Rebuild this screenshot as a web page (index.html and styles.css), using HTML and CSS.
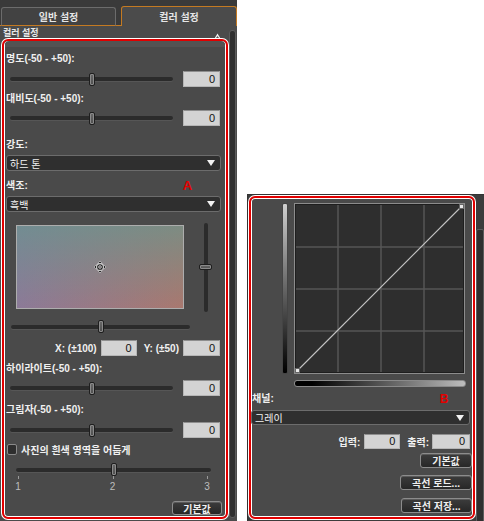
FILE: index.html
```html
<!DOCTYPE html>
<html lang="ko">
<head>
<meta charset="utf-8">
<title>컬러 설정</title>
<link rel="stylesheet" href="styles.css">
</head>
<body>
<div class="stage">
  <section class="panel-left">
    <div class="tabs">
      <div class="tab-gap first"></div>
      <div class="tab">일반 설정</div>
      <div class="tab-gap"></div>
      <div class="tab active">컬러 설정</div>
    </div>
    <div class="pane">
      <div class="pane-main">
        <div class="pane-head">
          <span>컬러 설정</span>
          <svg class="caret" width="7" height="6" viewBox="0 0 7 6"><path d="M3.5 0.5 L6.5 5.5 L0.5 5.5 Z" fill="#f2f2f2"/><path d="M3.5 3 L5 5 L2 5 Z" fill="#555"/></svg>
        </div>
        <div class="frame frame-a">
          <div class="band"></div>
          <div class="lbl m5">명도(-50 - +50):</div>
          <div class="srow m5">
            <div class="slider w163"><div class="track"></div><div class="thumb" style="left:50.5%"></div></div>
            <div class="num">0</div>
          </div>
          <div class="lbl m5">대비도(-50 - +50):</div>
          <div class="srow m4">
            <div class="slider w163"><div class="track"></div><div class="thumb" style="left:50.5%"></div></div>
            <div class="num">0</div>
          </div>
          <div class="lbl m12">강도:</div>
          <div class="select sel-a m3"><span>하드 톤</span><i class="arrow"></i></div>
          <div class="lbl lbl-row m8"><span>색조:</span><b class="mark mark-a">A</b></div>
          <div class="select sel-a m3"><span>흑백</span><i class="arrow"></i></div>
          <div class="tone m11">
            <div class="tone-box">
              <svg class="cross" width="13" height="13" viewBox="0 0 13 13">
                <path d="M6.5 0.5 L4.3 3 L8.7 3 Z M6.5 12.5 L4.3 10 L8.7 10 Z M0.5 6.5 L3 4.3 L3 8.7 Z M12.5 6.5 L10 4.3 L10 8.7 Z" fill="#111" stroke="#eee" stroke-width="0.6"/>
                <circle cx="6.5" cy="6.5" r="2.3" fill="none" stroke="#eee" stroke-width="2.2"/>
                <circle cx="6.5" cy="6.5" r="2.3" fill="none" stroke="#111" stroke-width="1.1"/>
              </svg>
            </div>
            <div class="vslider"><div class="vtrack"></div><div class="vthumb" style="top:49%"></div></div>
          </div>
          <div class="hrow m8">
            <div class="slider w179"><div class="track"></div><div class="thumb" style="left:50.3%"></div></div>
          </div>
          <div class="xyrow m7">
            <span class="xy-l">X: (±100)</span>
            <div class="num w36">0</div>
            <span class="xy-l y">Y: (±50)</span>
            <div class="num">0</div>
          </div>
          <div class="lbl m6">하이라이트(-50 - +50):</div>
          <div class="srow m4">
            <div class="slider w163"><div class="track"></div><div class="thumb" style="left:50.5%"></div></div>
            <div class="num">0</div>
          </div>
          <div class="lbl m7">그림자(-50 - +50):</div>
          <div class="srow m5">
            <div class="slider w163"><div class="track"></div><div class="thumb" style="left:50.5%"></div></div>
            <div class="num">0</div>
          </div>
          <div class="check m5"><span class="box"></span><span class="check-l">사진의 흰색 영역을 어둡게</span></div>
          <div class="hrow3 m8">
            <div class="slider w195"><div class="track"></div><div class="thumb" style="left:50%"></div></div>
          </div>
          <div class="ticks"><i></i><i></i><i></i></div>
          <div class="tnums"><span>1</span><span>2</span><span>3</span></div>
          <div class="btnrow m8"><div class="btn w50">기본값</div></div>
        </div>
      </div>
      <div class="scroll scroll-a"></div>
    </div>
  </section>

  <section class="panel-right">
    <div class="frame frame-b">
      <div class="curve m5">
        <div class="vbar"></div>
        <svg class="grid" width="171" height="171" viewBox="0 0 171 171">
          <rect x="0.5" y="0.5" width="170" height="170" fill="#2e2e2e" stroke="#8c8c8c"/>
          <rect x="1.5" y="1.5" width="168" height="168" fill="none" stroke="#1e1e1e"/>
          <g stroke="#565656" stroke-width="1.5">
            <line x1="44" y1="2" x2="44" y2="169"/>
            <line x1="87" y1="2" x2="87" y2="169"/>
            <line x1="130" y1="2" x2="130" y2="169"/>
            <line x1="2" y1="44" x2="169" y2="44"/>
            <line x1="2" y1="86" x2="169" y2="86"/>
            <line x1="2" y1="128" x2="169" y2="128"/>
          </g>
          <line x1="3.5" y1="167.5" x2="167.5" y2="3.5" stroke="#c4c4c4" stroke-width="1.1"/>
          <rect x="1.5" y="165.5" width="4" height="4" fill="#e8e8e8" stroke="#666" stroke-width="1"/>
          <rect x="165.5" y="1.5" width="4" height="4" fill="#e8e8e8" stroke="#666" stroke-width="1"/>
        </svg>
      </div>
      <div class="hbar m6"></div>
      <div class="lbl lbl-b lbl-row m5"><span>채널:</span><b class="mark mark-b">B</b></div>
      <div class="select sel-b m4"><span>그레이</span><i class="arrow"></i></div>
      <div class="iorow m9">
        <span class="io-l">입력:</span>
        <div class="num w36">0</div>
        <span class="io-l o">출력:</span>
        <div class="num w38">0</div>
      </div>
      <div class="btnrow-b m4"><div class="btn w52">기본값</div></div>
      <div class="btnrow-b m7"><div class="btn w72">곡선 로드...</div></div>
      <div class="btnrow-b m8"><div class="btn w71">곡선 저장...</div></div>
    </div>
    <div class="scroll scroll-b"></div>
  </section>
</div>
</body>
</html>
```

FILE: styles.css
```css
* { box-sizing: border-box; }
html, body { margin: 0; padding: 0; background: #fff; }
body {
  font-family: "Liberation Sans", "Noto Sans CJK KR", sans-serif;
  font-size: 10px;
  color: #ececec;
}
.stage { display: flex; align-items: flex-start; width: 484px; height: 521px; }

.m3 { margin-top: 3px; } .m4 { margin-top: 4px; } .m5 { margin-top: 5px; }
.m6 { margin-top: 6px; } .m7 { margin-top: 7px; } .m8 { margin-top: 8px; }
.m9 { margin-top: 9px; } .m11 { margin-top: 11px; } .m12 { margin-top: 12px; }

/* ---------- left panel ---------- */
.panel-left {
  width: 237px; height: 521px; flex: none;
  background: #3a3a3a;
  display: flex; flex-direction: column;
}
.tabs { height: 26px; flex: none; display: flex; align-items: flex-end; }
.tab-gap { width: 5px; height: 1px; background: #c47a22; }
.tab-gap.first { width: 1px; }
.tab {
  width: 115px; height: 19px;
  border: 1px solid #6c6c6c; border-bottom: 1px solid #c47a22;
  border-radius: 3px 3px 0 0;
  background: #424242;
  display: flex; align-items: center; justify-content: center;
  font-weight: bold; font-size: 10px; color: #e6e6e6;
  padding-bottom: 1px;
}
.tab.active {
  width: 116px; height: 20px;
  border: 1px solid #c47a22; border-bottom: none;
  background: #4b4b4b;
  padding-bottom: 0;
}
.pane { flex: 1; display: flex; background: #4b4b4b; }
.pane-main { width: 229px; display: flex; flex-direction: column; }
.pane-head {
  height: 13px; display: flex; align-items: center;
  padding: 0 8px 0 3px;
  font-size: 9px; font-weight: bold; color: #e8e8e8;
}
.caret { margin-left: auto; margin-top: 7px; }

.frame {
  border: 2px solid #e10000;
  border-radius: 6px;
  box-shadow: 0 0 0 1px #fff, inset 0 0 0 1px #fff;
  background: #4a4a4a;
  display: flex; flex-direction: column;
}
.frame-a { margin-left: 2px; width: 226px; height: 480px; }
.band { height: 6px; background: #535353; margin: 0 1px; border-radius: 4px 4px 0 0; }

.lbl {
  height: 14px; line-height: 14px;
  font-weight: bold; font-size: 10px; color: #f0f0f0;
  padding-left: 2px; white-space: nowrap;
}
.lbl-row { display: flex; align-items: center; }
.mark { color: #e30000; font-size: 13px; font-weight: bold; }
.mark-a { margin-left: 155px; }
.lbl-b { padding-left: 1px; }
.mark-b { margin-left: 166px; font-size: 12px; }

.srow { height: 16px; display: flex; align-items: center; }
.slider { position: relative; height: 13px; display: flex; align-items: center; }
.srow .slider { margin-left: 6px; }
.w163 { width: 163px; } .w179 { width: 179px; } .w195 { width: 195px; }
.track {
  width: 100%; height: 4px;
  background: #2b2b2b;
  border-radius: 2px;
  box-shadow: 0 1px 0 #565656;
}
.thumb {
  position: absolute; top: 0;
  width: 6px; height: 13px; margin-left: -3px;
  border: 1px solid #1e1e1e; border-radius: 2px;
  background: linear-gradient(#6a6a6a, #4e4e4e);
  box-shadow: inset 0 0 0 1px #8a8a8a;
}
.num {
  width: 37px; height: 16px;
  margin-left: 10px;
  background: #d3d3d3;
  border: 1px solid #b6b6b6; border-top-color: #8e8e8e;
  color: #111; font-size: 11px; line-height: 14px;
  text-align: right; padding-right: 4px;
}
.w36 { width: 36px; } .w38 { width: 38px; }

.select {
  height: 16px;
  display: flex; align-items: center;
  background: #2f2f2f;
  border: 1px solid #6c6c6c; border-radius: 3px;
  padding: 0 5px 0 3px;
  font-size: 10px; color: #f2f2f2;
}
.sel-a { margin-left: 2px; margin-right: 5px; }
.arrow {
  margin-left: auto;
  width: 0; height: 0;
  border-left: 4px solid transparent; border-right: 4px solid transparent;
  border-top: 6px solid #f2f2f2;
}

.tone { height: 89px; display: flex; }
.tone-box {
  position: relative;
  margin: 2px 0 0 12px;
  width: 168px; height: 84px;
  border: 1px solid #adadad;
  background:
    linear-gradient(to bottom, rgba(98,152,142,0.62), rgba(150,110,130,0) 100%),
    linear-gradient(to right, #8c7a98, #a9786f);
}
.cross { position: absolute; left: 50%; top: 50%; transform: translate(-50%, -50%); }
.vslider { position: relative; margin-left: 15px; width: 13px; height: 89px; display: flex; justify-content: center; }
.vtrack { width: 4px; height: 100%; background: #2b2b2b; border-radius: 2px; }
.vthumb {
  position: absolute; left: 0;
  width: 13px; height: 6px; margin-top: -3px;
  border: 1px solid #1e1e1e; border-radius: 2px;
  background: linear-gradient(#6a6a6a, #4e4e4e);
  box-shadow: inset 0 0 0 1px #8a8a8a;
}
.hrow { height: 13px; display: flex; }
.hrow .slider { margin-left: 7px; }

.xyrow { height: 16px; display: flex; align-items: center; justify-content: flex-end; padding-right: 6px; }
.xy-l { font-weight: bold; font-size: 10px; color: #f0f0f0; white-space: nowrap; }
.xyrow .num { margin-left: 4px; }
.xy-l.y { margin-left: 7px; }

.check { height: 12px; display: flex; align-items: center; padding-left: 3px; }
.box {
  width: 10px; height: 11px;
  background: #2e2e2e; border: 1px solid #8a8a8a; border-radius: 2px;
}
.check-l { margin-left: 4px; font-weight: bold; font-size: 10px; color: #f0f0f0; white-space: nowrap; }
.hrow3 { height: 13px; display: flex; }
.hrow3 .slider { margin-left: 12px; }
.ticks { height: 3px; display: flex; justify-content: space-between; margin-left: 14px; width: 190px; }
.ticks i { width: 1px; height: 3px; background: #9a9a9a; }
.tnums {
  margin-top: 2px; height: 12px;
  display: flex; justify-content: space-between;
  margin-left: 9px; width: 199px;
}
.tnums span { width: 10px; text-align: center; font-size: 10px; line-height: 12px; color: #bdbdbd; }
.btnrow { height: 14px; display: flex; justify-content: flex-end; padding-right: 4px; }
.btn {
  height: 14px;
  display: flex; align-items: center; justify-content: center;
  background: linear-gradient(#3c3c3c, #272727);
  border: 1px solid #8c8c8c; border-radius: 3px;
  box-shadow: inset 0 1px 0 #5a5a5a;
  font-weight: bold; font-size: 10px; color: #f0f0f0;
  white-space: nowrap;
}
.w50 { width: 50px; } .w52 { width: 52px; } .w72 { width: 72px; } .w71 { width: 71px; }

.scroll {
  width: 7px;
  background: #2f2f2f;
  border: 1px solid #5c5c5c; border-radius: 3px;
}
.scroll-a { margin-top: 4px; height: 488px; }

/* ---------- right panel ---------- */
.panel-right {
  margin-left: 10px; margin-top: 194px;
  width: 237px; height: 327px; flex: none;
  border-left: 1px solid #333; border-top: 1px solid #333;
  background: #3c3c3c;
  display: flex; align-items: flex-start;
}
.frame-b { margin: 1px 0 0 1px; width: 226px; height: 323px; }
.curve { height: 171px; display: flex; }
.vbar {
  margin-left: 31px; width: 6px; height: 171px;
  border: 1px solid #444; border-radius: 2px;
  background: linear-gradient(#cfcfcf, #7a7a7a 40%, #000);
}
.grid { margin-left: 6px; display: block; }
.hbar {
  margin-left: 43px; width: 172px; height: 7px;
  border: 1px solid #8a8a8a; border-radius: 3px;
  background: linear-gradient(to right, #000 10%, #bdbdbd);
}
.sel-b { margin-left: 0; margin-right: 3px; height: 15px; }
.iorow { height: 15px; display: flex; align-items: center; justify-content: flex-end; padding-right: 3px; }
.io-l { font-weight: bold; font-size: 10px; color: #f0f0f0; white-space: nowrap; }
.iorow .num { height: 15px; line-height: 13px; margin-left: 4px; }
.io-l.o { margin-left: 7px; }
.iorow .num.w38 { margin-left: 3px; }
.btnrow-b { display: flex; justify-content: flex-end; padding-right: 1px; }
.btnrow-b .btn { height: 15px; }
.scroll-b { margin-top: 34px; margin-left: 1px; width: 8px; height: 294px; border-radius: 2px; }
```
